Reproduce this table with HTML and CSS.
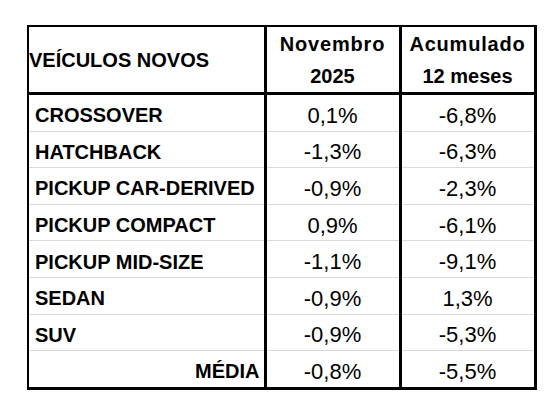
FILE: index.html
```html
<!DOCTYPE html>
<html>
<head>
  <meta charset="utf-8">
  <title>Veículos Novos</title>
  <link rel="stylesheet" href="styles.css">
</head>
<body>
  <table class="sales-table">
    <colgroup>
      <col class="col-label">
      <col class="col-value">
      <col class="col-value">
    </colgroup>
    <thead>
      <tr>
        <th class="head-label">VEÍCULOS NOVOS</th>
        <th class="head-value"><span class="spaced">Novembro</span><br>2025</th>
        <th class="head-value"><span class="spaced">Acumulado</span><br>12 meses</th>
      </tr>
    </thead>
    <tbody>
      <tr><td class="label">CROSSOVER</td><td>0,1%</td><td>-6,8%</td></tr>
      <tr><td class="label">HATCHBACK</td><td>-1,3%</td><td>-6,3%</td></tr>
      <tr><td class="label">PICKUP CAR-DERIVED</td><td>-0,9%</td><td>-2,3%</td></tr>
      <tr><td class="label">PICKUP COMPACT</td><td>0,9%</td><td>-6,1%</td></tr>
      <tr><td class="label">PICKUP MID-SIZE</td><td>-1,1%</td><td>-9,1%</td></tr>
      <tr><td class="label">SEDAN</td><td>-0,9%</td><td>1,3%</td></tr>
      <tr><td class="label">SUV</td><td>-0,9%</td><td>-5,3%</td></tr>
      <tr class="total"><td class="label">MÉDIA</td><td>-0,8%</td><td>-5,5%</td></tr>
    </tbody>
  </table>
</body>
</html>
```

FILE: styles.css
```css
body {
  margin: 0;
  background: #fff;
  font-family: "Liberation Sans", Arial, sans-serif;
  color: #000;
}
.sales-table {
  margin: 25px 0 0 27px;
  border-collapse: collapse;
  table-layout: fixed;
  border-top: 2px solid #000;
  border-left: 2px solid #000;
  border-right: 3px solid #000;
  border-bottom: 3px solid #000;
}
.col-label {
  width: 237px;
}
.col-value {
  width: 135px;
}
.sales-table th,
.sales-table td {
  padding: 0;
  height: 29.6px;
  border-bottom: 1px solid #dadada;
}
.sales-table th + th,
.sales-table td + td {
  border-left: 3px solid #000;
}
.sales-table thead th {
  height: 65px;
  border-bottom: 3px solid #000;
  font-size: 20px;
  font-weight: bold;
  line-height: 32px;
}
.head-label {
  text-align: left;
  padding-left: 16px;
  padding-top: 5px;
}
.head-value {
  text-align: center;
}
.spaced {
  letter-spacing: 0.8px;
}
.sales-table td {
  font-size: 22px;
  text-align: center;
  padding-top: 6px;
}
.sales-table td.label {
  font-size: 20px;
  font-weight: bold;
  text-align: left;
  padding-left: 6px;
}
.total td.label {
  text-align: right;
  padding-right: 4px;
}
.total td {
  border-bottom: 0;
}
```
